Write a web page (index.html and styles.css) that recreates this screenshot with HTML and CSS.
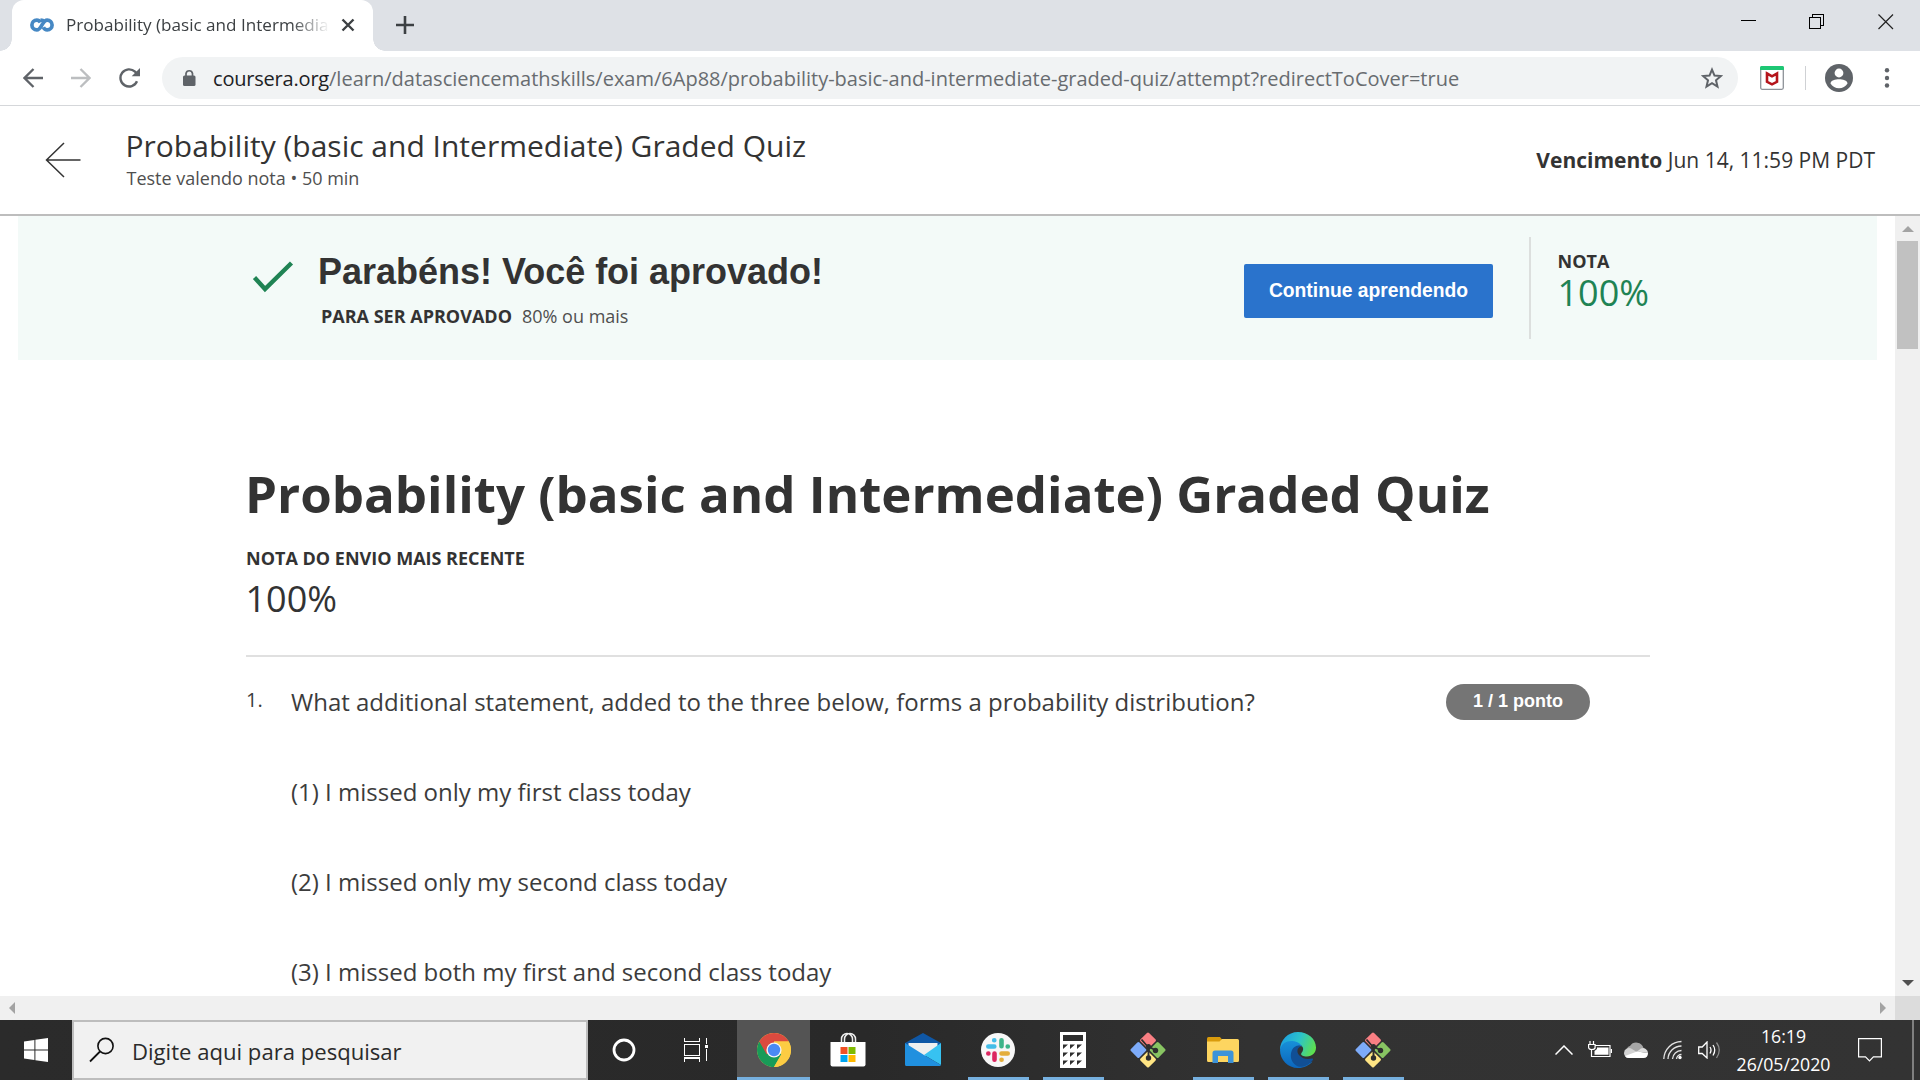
FILE: index.html
```html
<!DOCTYPE html>
<html lang="pt-BR">
<head>
<meta charset="utf-8">
<title>Probability (basic and Intermediate) Graded Quiz</title>
<link rel="stylesheet" href="styles.css">
</head>
<body>
<svg width="0" height="0" class="defs">
  <defs>
    <symbol id="git" viewBox="0 0 36 36">
      <g transform="rotate(45 18 18)">
        <rect x="5.2" y="5.2" width="12" height="12" rx="1.500" fill="#f97f83"/>
        <rect x="18.800" y="5.200" width="12" height="12" rx="1.500" fill="#88c462"/>
        <rect x="18.800" y="18.800" width="12" height="12" rx="1.500" fill="#ffe584"/>
        <rect x="5.200" y="18.800" width="12" height="12" rx="1.500" fill="#7dabf9"/>
      </g>
      <path d="M11.500 7.500L18 15M18.500 14v12M18.500 14.500l6.500 3.500" stroke="#2e2e2e" stroke-width="1.900" fill="none"/>
      <circle cx="18.500" cy="14.500" r="2.500" fill="#2e2e2e"/>
      <circle cx="18.500" cy="26" r="2.700" fill="#2e2e2e"/>
      <circle cx="25.500" cy="18.500" r="2.700" fill="#2e2e2e"/>
    </symbol>
  </defs>
</svg>

<div class="tabstrip">
  <div class="tab">
    <svg class="favicon" width="24" height="14" viewBox="0 0 24 14"><path d="M15.300 4.600C14.200 3 12.800 2 10.500 2M10.300 4.500C9.500 2.900 8.500 2.100 6.800 2.100a4.900 4.900 0 0 0 0 9.800c4.800 0 5.400-9.800 10.400-9.800a4.900 4.900 0 0 1 0 9.800c-1.900 0-3-1-3.800-2.700" fill="none" stroke="#4688c4" stroke-width="3.700"/></svg>
    <span class="tab-title">Probability (basic and Intermediate)</span>
    <svg class="close" width="14" height="14" viewBox="0 0 14 14"><path d="M1.500 1.500l11 11M12.500 1.500l-11 11" stroke="#3c4043" stroke-width="2.400"/></svg>
  </div>
  <svg class="plus" width="18" height="18" viewBox="0 0 18 18"><path d="M9 0v18M0 9h18" stroke="#3c4043" stroke-width="2.600"/></svg>
  <div class="window-buttons">
    <svg width="16" height="16" viewBox="0 0 16 16" shape-rendering="crispEdges"><path d="M1 6.500h15" stroke="#000" stroke-width="1"/></svg>
    <svg width="16" height="16" viewBox="0 0 16 16" shape-rendering="crispEdges"><path d="M.5 3.500h11v11H.5zM3.500 3.500V.5h11v11h-3" fill="none" stroke="#000"/></svg>
    <svg width="16" height="16" viewBox="0 0 16 16"><path d="M.5.5l14.500 14.500M15 .5L.5 15" stroke="#222" stroke-width="1.200"/></svg>
  </div>
</div>

<div class="toolbar">
  <div class="nav">
    <svg width="20" height="20" viewBox="0 0 20 20"><path d="M20 10H2M10.500 1L1.500 10l9 9" fill="none" stroke="#5f6368" stroke-width="2.300"/></svg>
    <svg width="20" height="20" viewBox="0 0 20 20"><path d="M0 10h18M9.500 1l9 9-9 9" fill="none" stroke="#bcbec0" stroke-width="2.300"/></svg>
    <svg width="22" height="20" viewBox="0 0 22 20"><path d="M18 13.300A8.600 8.600 0 1 1 16 3.700l2 2" fill="none" stroke="#5f6368" stroke-width="2.400"/><path d="M21 0v8.300h-8.300z" fill="#5f6368"/></svg>
  </div>
  <div class="omnibox">
    <svg width="14" height="18" viewBox="0 0 14 18"><rect x="1" y="6.500" width="12.500" height="10.500" rx="1.500" fill="#5f6368"/><path d="M4 7V4.500a3.300 3.300 0 0 1 6.500 0V7" fill="none" stroke="#5f6368" stroke-width="1.700"/></svg>
    <span class="url"><b>coursera.org</b>/learn/datasciencemathskills/exam/6Ap88/probability-basic-and-intermediate-graded-quiz/attempt?redirectToCover=true</span>
    <svg class="star" width="22" height="22" viewBox="0 0 22 22"><path d="M11 2.600l2.500 6 6.300.5-4.800 4.200 1.500 6.300L11 16.200l-5.500 3.400L7 13.300 2.200 9.100l6.300-.5z" fill="none" stroke="#5f6368" stroke-width="2"/></svg>
  </div>
  <svg class="shield" width="24" height="24" viewBox="0 0 24 24"><rect x=".7" y=".7" width="22.600" height="22.600" rx="1.500" fill="#fff" stroke="#8d9298" stroke-width="1.300"/><path d="M0 4V1.500Q0 0 1.500 0h21Q24 0 24 1.500V4z" fill="#1dc774"/><path d="M7 7.500l5 2.800 5-2.800v8.300l-5 2.600-5-2.600z" fill="none" stroke="#b5141b" stroke-width="2.600"/></svg>
  <i class="separator"></i>
  <svg class="profile" width="28" height="28" viewBox="0 0 28 28"><circle cx="14" cy="14" r="14" fill="#5f6368"/><circle cx="14" cy="9" r="4.400" fill="#fff"/><path d="M5.500 19.500c0-3 5-4.300 8.500-4.300s8.500 1.300 8.500 4.300c-1.800 3-5 4.800-8.500 4.800s-6.700-1.800-8.500-4.800z" fill="#fff"/></svg>
  <svg class="more" width="6" height="20" viewBox="0 0 6 20"><g fill="#5f6368"><circle cx="3" cy="2.200" r="2.200"/><circle cx="3" cy="10" r="2.200"/><circle cx="3" cy="17.500" r="2.200"/></g></svg>
</div>

<header class="quiz-header">
  <svg width="36" height="36" viewBox="0 0 36 36"><path d="M35.500 18H1.500M19 1L1.500 18 19 35" fill="none" stroke="#333" stroke-width="1.500"/></svg>
  <div class="heading">
    <div class="heading-title">Probability (basic and Intermediate) Graded Quiz</div>
    <div class="heading-sub">Teste valendo nota • 50 min</div>
  </div>
  <div class="due"><b>Vencimento</b> Jun 14, 11:59 PM PDT</div>
</header>

<div class="viewport">
  <main class="page">
    <section class="banner">
      <svg class="check" width="42" height="34" viewBox="0 0 42 34"><path d="M2.500 17.500l10.500 11.500L39.500 3" fill="none" stroke="#1f8354" stroke-width="4.400"/></svg>
      <div class="result">
        <div class="result-title">Parabéns! Você foi aprovado!</div>
        <div class="result-sub"><b>PARA SER APROVADO</b><span>80% ou mais</span></div>
      </div>
      <button class="continue">Continue aprendendo</button>
      <div class="grade">
        <div class="label">NOTA</div>
        <div class="score">100%</div>
      </div>
    </section>
    <section class="quiz">
      <h1>Probability (basic and Intermediate) Graded Quiz</h1>
      <div class="label">NOTA DO ENVIO MAIS RECENTE</div>
      <div class="score">100%</div>
      <div class="question">
        <div class="number">1.</div>
        <div class="prompt">
          <p>What additional statement, added to the three below, forms a probability distribution?</p>
          <p>(1) I missed only my first class today</p>
          <p>(2) I missed only my second class today</p>
          <p>(3) I missed both my first and second class today</p>
        </div>
        <div class="points">1 / 1 ponto</div>
      </div>
    </section>
  </main>
  <div class="vscroll">
    <svg width="12" height="6" viewBox="0 0 12 6"><path d="M0 6l6-6 6 6z" fill="#a3a3a3"/></svg>
    <i class="thumb"></i>
    <svg width="12" height="6" viewBox="0 0 12 6"><path d="M0 0l6 6 6-6z" fill="#505050"/></svg>
  </div>
</div>
<div class="hscroll">
  <svg width="6" height="12" viewBox="0 0 6 12"><path d="M6 0L0 6l6 6z" fill="#a3a3a3"/></svg>
  <svg width="6" height="12" viewBox="0 0 6 12"><path d="M0 0l6 6-6 6z" fill="#a3a3a3"/></svg>
  <i class="corner"></i>
</div>

<div class="taskbar">
  <div class="start"><svg width="24" height="24" viewBox="0 0 24 24"><path d="M0 3.400L10.400 2v9.500H0zM11.400 1.800L24 0v11.500H11.400zM0 12.500h10.400V22L0 20.600zM11.400 12.500H24V24l-12.600-1.800z" fill="#fff"/></svg></div>
  <div class="search">
    <svg width="26" height="26" viewBox="0 0 26 26"><circle cx="16.500" cy="9" r="7.600" fill="none" stroke="#111" stroke-width="1.600"/><path d="M11 14.500L1 24.500" stroke="#111" stroke-width="1.800"/></svg>
    <span>Digite aqui para pesquisar</span>
  </div>
  <div class="slot narrow"><svg width="24" height="24" viewBox="0 0 24 24"><circle cx="12" cy="12" r="10" fill="none" stroke="#fff" stroke-width="2.800"/></svg></div>
  <div class="slot view"><svg width="24" height="24" viewBox="0 0 24 24" shape-rendering="crispEdges"><path d="M.5 0v3.500h15V0M.5 6.500h15v11H.5zM.5 23.500V20h15v3.500M22.500 0v6M22.500 11v12" fill="none" stroke="#fff" stroke-width="1.100"/><path d="M21 7h3v3h-3z" fill="#fff"/></svg></div>
  <div class="slot active"><svg width="34" height="34" viewBox="0 0 34 34"><circle cx="17" cy="17" r="17" fill="#fccc43"/><path d="M2.300 8.500A17 17 0 0 0 17 34l7.400-12.800L17 17z" fill="#189b58"/><path d="M2.300 8.500A17 17 0 0 1 31.700 8.500H17v8l-7.400 4.800z" fill="#db4a3f"/><path d="M31.700 8.500A17 17 0 0 1 17 34l7.400-12.800L17 8.500z" fill="#fccc43"/><circle cx="17" cy="17" r="7.600" fill="#f5f5f5"/><circle cx="17" cy="17" r="6.200" fill="#4a8af4"/></svg></div>
  <div class="slot"><svg width="36" height="36" viewBox="0 0 36 36"><path d="M11.500 10V7a5.500 5.500 0 0 1 11 0v3M14.500 10V7a5.500 5.500 0 0 1 11 0v3" fill="none" stroke="#eee" stroke-width="1.500"/><path d="M.5 10h35v22.500q0 2-2 2h-31q-2 0-2-2z" fill="#fff"/><path d="M10.500 15h7v7h-7z" fill="#f05125"/><path d="M18.500 15h7v7h-7z" fill="#7fba00"/><path d="M10.500 23h7v7h-7z" fill="#00a4ef"/><path d="M18.500 23h7v7h-7z" fill="#ffb900"/></svg></div>
  <div class="slot"><svg width="36" height="36" viewBox="0 0 36 36"><path d="M0 11L18 1l18 10v10H0z" fill="#0f57a5"/><path d="M3.500 11h29v8L18 25 3.500 17z" fill="#efefef"/><path d="M0 11l19 12L36 11v21.500q0 1.500-1.500 1.500h-33Q0 34 0 32.500z" fill="none"/><path d="M19 23l17-12v22z" fill="#37c2f1"/><path d="M0 11l19 12 17 10q-.5 1-1.500 1h-33Q0 34 0 32.500z" fill="#2090df"/></svg></div>
  <div class="slot running"><svg width="34" height="34" viewBox="0 0 34 34"><circle cx="17" cy="17" r="17" fill="#f7f7f7"/><g stroke-width="4.600" stroke-linecap="round"><path d="M13.200 7.300h.1M7.300 13.500h6" stroke="#44bde8"/><path d="M20.500 7.300v6M26.700 13.500h.1" stroke="#3eb489"/><path d="M20.500 26.700h.1M20.500 20.500h6.200" stroke="#e4ad3a"/><path d="M13.500 20.500v6.200M7.300 20.500h.1" stroke="#dc2660"/></g></svg></div>
  <div class="slot running"><svg width="26" height="36" viewBox="0 0 26 36"><path d="M0 0h26v36H0z" fill="#fff"/><path d="M3 3h20v6H3zM3 12.500h5L3 17zM10 12.500h5L10 17zM17 12.500h5L17 17zM3 20.500h5L3 25zM10 20.500h5L10 25zM17 20.500h5L17 25zM3 28.500h5L3 33zM10 28.500h5L10 33zM17 28.500h5L17 33z" fill="#2e2e2e"/></svg></div>
  <div class="slot"><svg width="36" height="36"><use href="#git"/></svg></div>
  <div class="slot running"><svg width="32" height="36" viewBox="0 0 32 36"><path d="M0 8V6.500Q0 5 1.500 5H13l2 2.500V12H0z" fill="#d99b0c"/><path d="M0 9.500h12.500L15 7h15.500Q32 7 32 8.500v20q0 1.500-1.500 1.500h-29Q0 30 0 28.500z" fill="#fdd560"/><path d="M5.500 31V21q0-2.500 2.500-2.500h16q2.500 0 2.500 2.500v10H21v-7H11v7z" fill="#3d93d8"/></svg></div>
  <div class="slot running"><svg width="36" height="36" viewBox="0 0 36 36">
    <defs>
      <linearGradient id="edge-top" x1="0" x2="1" y1=".3" y2=".6"><stop offset="0" stop-color="#1b9de2"/><stop offset=".5" stop-color="#2cc4c9"/><stop offset="1" stop-color="#5fe04c"/></linearGradient>
      <linearGradient id="edge-left" x1="0" x2="0" y1="0" y2="1"><stop offset="0" stop-color="#1790d8"/><stop offset="1" stop-color="#0c66bd"/></linearGradient>
    </defs>
    <path d="M0 18C0 8 8 0 18 0s18 7 18 15.500c0 5.500-4 9-9 9-4 0-7-1.500-5.500-3.500 4-5 .5-9-6-9C8 12 2 14 0 18z" fill="url(#edge-top)"/>
    <path d="M0 18C1.500 11 7 8.500 12.500 9c5 .5 8.500 3 9.500 5.500C14 11 10 22 16 28c4 4 10 5 16.500 1.500C29 33.500 24 36 18 36 8 36 0 28 0 18z" fill="url(#edge-left)"/>
    <path d="M12 18c2-4 6-5.500 10-4-5 1-6 6-2.500 9.500 3 3.500 8 4 12.500 3 1 0 1.500.5.500 2C28 34 22 35.500 18 34.500 12 32 9 25 12 18z" fill="#114f95"/>
  </svg></div>
  <div class="slot running"><svg width="36" height="36"><use href="#git"/></svg></div>

  <div class="tray">
    <svg width="18" height="10" viewBox="0 0 18 10"><path d="M.5 9.500L9 1l8.500 8.500" fill="none" stroke="#fff" stroke-width="1.500"/></svg>
    <svg width="24" height="18" viewBox="0 0 24 18"><path d="M7 4.500h15v11H3.500V9M23.500 8v4" fill="none" stroke="#fff" stroke-width="1.200"/><path d="M9 6.500h11.500v7.300H6.500V10L9 8z" fill="#fff"/><path d="M2 0v3M5.500 0v3M.6 3.500h6.500v3q0 2-3.200 2T.6 6.500z" fill="none" stroke="#fff" stroke-width="1.200"/></svg>
    <svg width="24" height="16" viewBox="0 0 24 16"><path d="M3 8a4 4 0 0 1 3-4 7.500 7.500 0 0 1 13.500 2L12 12z" fill="#a6a6a6"/><path d="M0 11a5 5 0 0 1 8-4l8 5-10 4a5 5 0 0 1-6-5z" fill="#d2d2d2"/><path d="M13 9.500l4-3a5 5 0 0 1 7 4.500z" fill="#dedede"/><path d="M1 14l12-4.500 11 1.500q0 5-4.500 5H5q-3 0-4-2z" fill="#fff"/></svg>
    <svg width="20" height="20" viewBox="0 0 20 20"><g fill="none" stroke="#e4e4e4" stroke-width="1.300"><path d="M.8 19A18 18 0 0 1 18.500 1.500M5 19A13.500 13.500 0 0 1 18.500 6M9.500 19a9 9 0 0 1 9-8.500M13.500 19a5 5 0 0 1 5-4.500"/></g><circle cx="17" cy="17.500" r="1.700" fill="#fff"/></svg>
    <svg width="23" height="18" viewBox="0 0 23 18"><path d="M.7 6v6.500h3.500L9 17V1L4.200 6z" fill="none" stroke="#fff" stroke-width="1.300"/><path d="M12 6q2 3 0 6.500M15 4q3.500 5 0 10.500" fill="none" stroke="#fff" stroke-width="1.300"/><path d="M18.500 1.500q5.500 7.500 0 15.500" fill="none" stroke="#8b8b8b" stroke-width="1.300"/></svg>
    <div class="clock"><span>16:19</span><span>26/05/2020</span></div>
    <svg class="notify" width="24" height="24" viewBox="0 0 24 24"><path d="M.6.6h22.800v18.300h-8L11.500 23l-4-4.100H.6z" fill="none" stroke="#fff" stroke-width="1.200"/></svg>
  </div>
  <i class="peek"></i>
</div>
</body>
</html>
```

FILE: styles.css
```css
* { box-sizing: border-box; margin: 0; }
body {
  width: 1920px;
  height: 1080px;
  overflow: hidden;
  background: #fff;
  color: #333;
  font-family: "Open Sans", "Noto Sans", sans-serif;
}
svg { display: block; flex: none; }
.defs { position: absolute; }

/* Browser tabs */
.tabstrip { display: flex; height: 51px; padding-left: 12px; background: #dee1e6; }
.tab {
  position: relative;
  display: flex;
  align-items: center;
  width: 361px;
  padding: 0 18px 2px;
  background: #fff;
  border-radius: 12px 12px 0 0;
}
.tab::before, .tab::after {
  content: "";
  position: absolute;
  bottom: 0;
  width: 12px;
  height: 12px;
}
.tab::before { left: -12px; background: radial-gradient(circle at 0 0, transparent 11.500px, #fff 12px); }
.tab::after { right: -12px; background: radial-gradient(circle at 100% 0, transparent 11.500px, #fff 12px); }
.tab-title {
  width: 262px;
  margin: 0 auto 0 12px;
  overflow: hidden;
  white-space: nowrap;
  font-size: 17.100px;
  line-height: 26px;
  color: #3c4043;
  -webkit-mask-image: linear-gradient(90deg, #000 225px, transparent 264px);
  mask-image: linear-gradient(90deg, #000 225px, transparent 264px);
}
.plus { margin: 16px 0 0 23px; }
.window-buttons { display: flex; gap: 53px; margin: 14px 26px 0 auto; }

/* Address bar */
.toolbar { display: flex; align-items: center; height: 55px; padding-left: 23px; border-bottom: 1px solid #d5d7da; }
.nav { display: flex; gap: 28px; width: 139px; }
.omnibox {
  display: flex;
  align-items: center;
  width: 1576px;
  height: 42px;
  padding: 0 15px 0 20px;
  border-radius: 21px;
  background: #f1f3f4;
}
.url { margin: 2px 0 0 17px; font-size: 20px; line-height: 28px; white-space: nowrap; color: #686c70; }
.url b { font-weight: 400; color: #202124; letter-spacing: -.2px; }
.star { margin-left: auto; }
.shield { margin-left: 22px; }
.separator { width: 1px; height: 24px; margin: 0 19px 0 21px; background: #cfd1d4; }
.more { margin-left: 31px; }

/* Quiz header */
.quiz-header { display: flex; height: 110px; padding: 0 45px; border-bottom: 2px solid #bdbdbd; }
.quiz-header > svg { margin-top: 36px; }
.heading { padding: 22px 0 0 44.500px; }
.heading-title { font-size: 30px; line-height: 36px; }
.heading-sub { margin: 1px 0 0 1px; font-size: 18px; line-height: 27px; color: #4f4f4f; }
.due { margin: 39px 0 0 auto; font-size: 21px; line-height: 30px; }

/* Scrolling page */
.viewport { display: flex; height: 780px; }
.page { width: 1895px; padding: 0 18px; overflow: hidden; }
.banner { display: flex; height: 144px; padding: 0 227px 0 234px; background: #f3faf8; }
.check { margin-top: 44px; }
.result { margin-left: 24px; padding-top: 35px; }
.result-title { font: 700 36px/42px "Liberation Sans", Arial, sans-serif; letter-spacing: -.02px; }
.result-sub { display: flex; gap: 10px; margin: 10px 0 0 3px; font-size: 18px; line-height: 27px; }
.result-sub span { color: #4f4f4f; }
.continue {
  width: 249px;
  height: 54px;
  margin: 48px 36px 0 auto;
  padding: 0 0 2px;
  border: 0;
  border-radius: 2px;
  background: #2a73cc;
  color: #fff;
  font: 700 19.300px/27px "Liberation Sans", Arial, sans-serif;
}
.grade { width: 121px; height: 102px; margin-top: 21px; padding: 11px 0 0 26.500px; border-left: 2px solid #dcdfde; }
.label { font-size: 18px; font-weight: 700; line-height: 27px; white-space: nowrap; }
.score { font-size: 36px; line-height: 36px; }
.grade .score { color: #1f8354; }
.quiz { width: 1404px; margin-left: 228px; padding-top: 103px; }
h1 { margin-left: -1px; font-size: 51px; line-height: 60px; white-space: nowrap; }
.quiz > .label { margin-top: 22px; }
.quiz > .score { margin: 9px 0 0 -.5px; }
.question { display: flex; margin-top: 38px; padding-top: 27px; border-top: 2px solid #e0e0e0; }
.number { width: 45px; padding-top: 1px; font-size: 20px; line-height: 30px; color: #3c3c3c; }
.prompt { font-size: 24px; line-height: 36px; color: #3c3c3c; }
.prompt p { margin-bottom: 54px; }
.points {
  width: 144px;
  height: 36px;
  margin: 0 60px 0 auto;
  border-radius: 18px;
  background: #757575;
  color: #fff;
  font: 700 18px/34px "Liberation Sans", Arial, sans-serif;
  text-align: center;
}

/* Scrollbars */
.vscroll { display: flex; flex-direction: column; align-items: center; width: 25px; padding: 10px 0 10px; background: #f0f0f0; }
.thumb { width: 21px; height: 108px; margin: 9px 0 auto; background: #c1c1c1; }
.hscroll { display: flex; align-items: center; height: 24px; padding-left: 9px; background: #f0f0f0; }
.hscroll svg + svg { margin: 0 9px 0 auto; }
.corner { width: 25px; height: 24px; background: #dcdcdc; }

/* Taskbar */
.taskbar { display: flex; height: 60px; background: linear-gradient(90deg, #2b2b2b, #292929 45%, #323232 65%, #333); }
.start { display: flex; width: 72px; padding: 18px 0 0 24px; }
.search {
  display: flex;
  align-items: center;
  width: 516px;
  padding-left: 15px;
  border: 2px solid #bdbdbd;
  background: #f1f1f1;
}
.search span { margin: 2px 0 0 17px; font-size: 22.100px; line-height: 30px; color: #2b2b2b; }
.slot { display: flex; align-items: center; justify-content: center; width: 75px; padding: 3px 2px 0 0; border-bottom: 3px solid transparent; }
.slot.narrow { width: 72px; padding-right: 0; }
.slot.view { width: 77px; padding-right: 6px; }
.slot.active { width: 73px; margin-right: 1px; padding-right: 0; background: #545454; border-color: #76b0df; }
.slot.running { width: 61px; margin: 0 7px; border-color: #76b0df; }
.tray { display: flex; align-items: center; margin-left: auto; }
.tray > svg { margin-right: 15px; }
.tray > svg:nth-child(2) { margin-right: 12px; }
.tray > svg:nth-child(5) { margin-right: 0; }
.clock { display: flex; flex-direction: column; width: 125px; text-align: center; color: #fff; font-size: 17.700px; line-height: 28px; }
.tray .notify { margin: 0 30px 0 12px; }
.peek { width: 2px; margin-right: 6px; background: #808080; }
```
